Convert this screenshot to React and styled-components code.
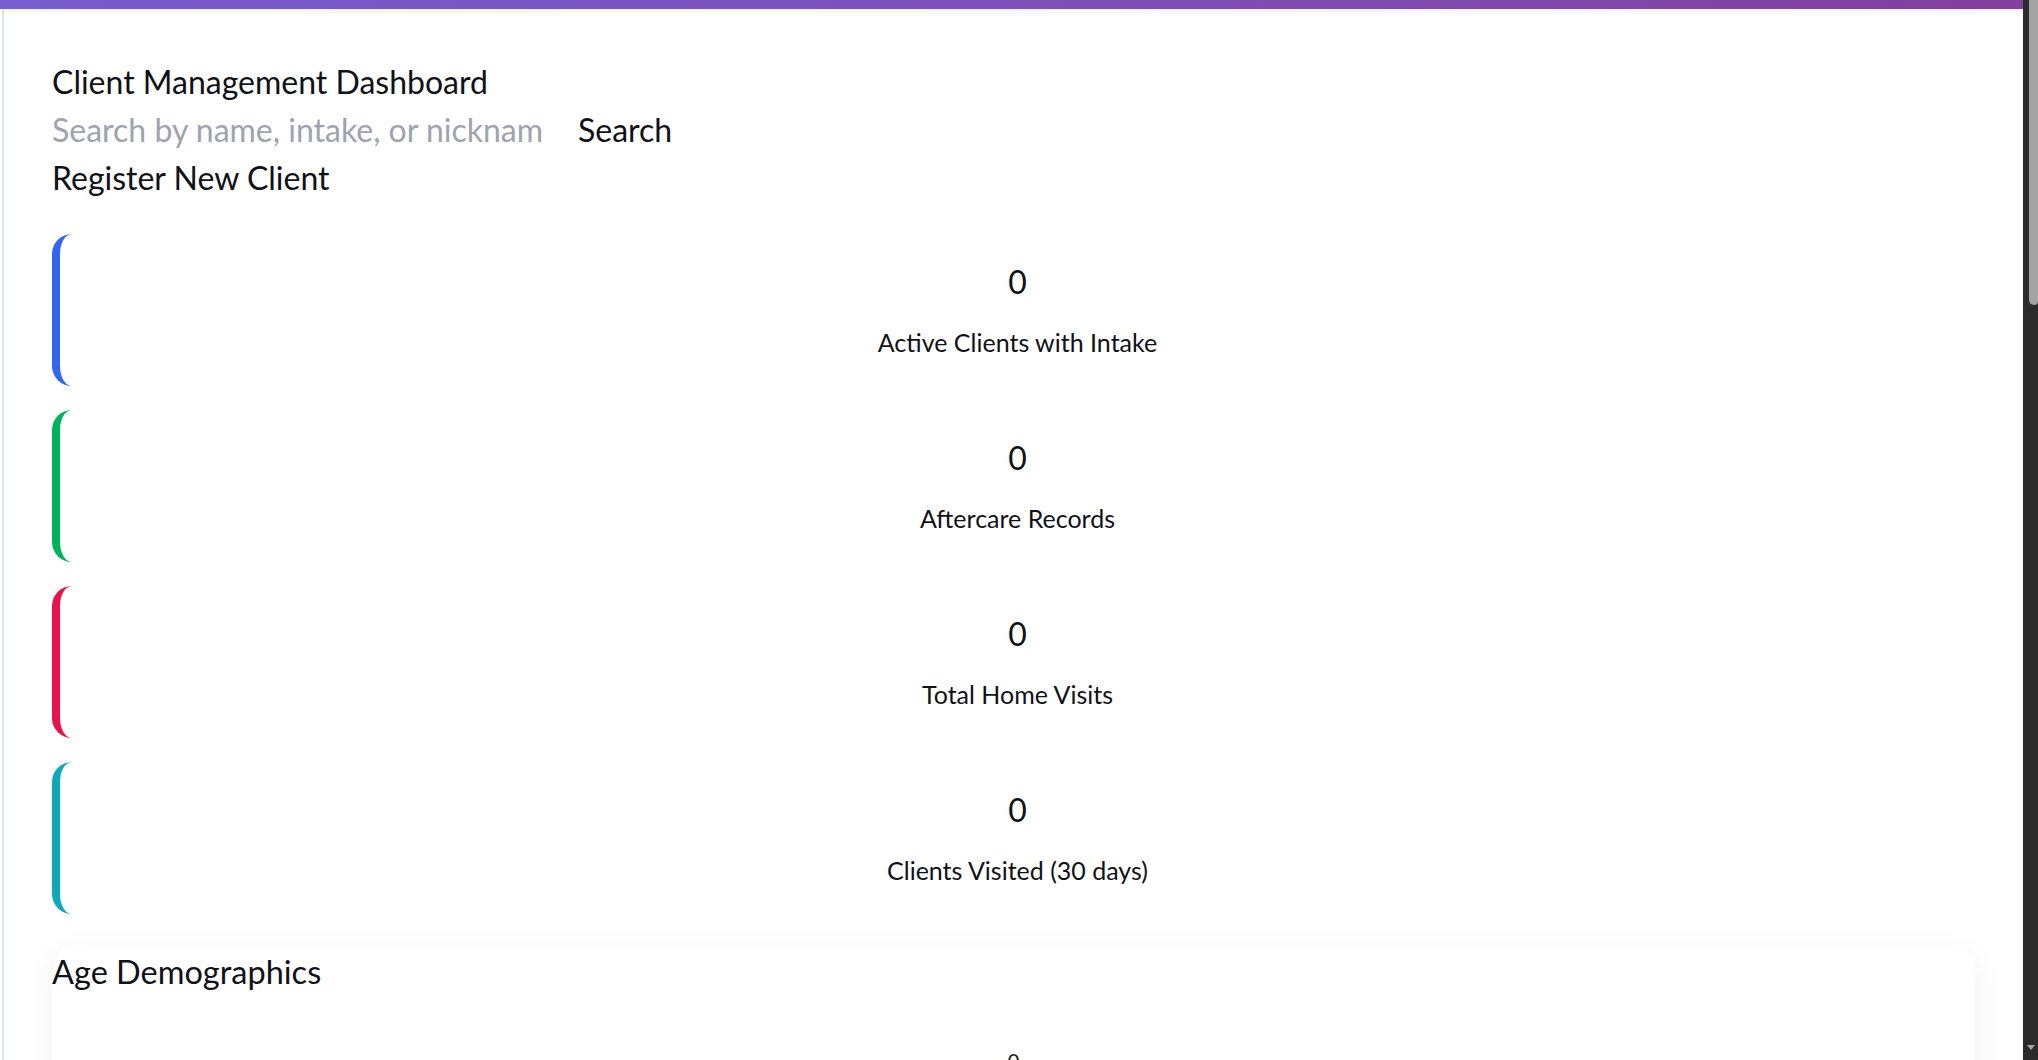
import React from "react";
import styled, { createGlobalStyle } from "styled-components";

const GlobalStyle = createGlobalStyle`
  html, body {
    margin: 0;
    padding: 0;
    background: #ffffff;
    color: #111118;
    font-family: Lato, "Open Sans", "Noto Sans", sans-serif;
  }
  * { box-sizing: border-box; }
`;

const Viewport = styled.div`
  display: flex;
  height: 100vh;
  overflow: hidden;
`;

const ScrollArea = styled.div`
  flex: 1;
  min-width: 0;
  overflow-y: auto;
  scrollbar-width: none;
  &::-webkit-scrollbar { display: none; }
`;

const ScrollTrack = styled.div`
  width: 15px;
  flex: none;
  background: #2b2b2b;
  display: flex;
  flex-direction: column;
  justify-content: space-between;
  align-items: flex-end;
`;

const ScrollThumb = styled.div`
  width: 9px;
  height: 305px;
  background: #a3a3a3;
  border-radius: 0 0 4px 5px;
`;

const ScrollArrow = styled.div`
  width: 0;
  height: 0;
  margin: 0 3px 10px 0;
  border-left: 4px solid transparent;
  border-right: 4px solid transparent;
  border-top: 5px solid #a3a3a3;
`;

const TopBar = styled.div`
  position: relative;
  z-index: 2;
  height: 9px;
  background: linear-gradient(90deg, #775dcd 0%, #7c50ba 50%, #833f9e 100%);
  box-shadow: 0 2px 6px rgba(0, 0, 0, 0.08);
`;

const Shell = styled.div`
  display: flex;
  min-height: 3580px;
`;

const Sidebar = styled.aside`
  width: 4px;
  flex: none;
  border-right: 2px solid #e0e4ec;
`;

const Main = styled.main`
  flex: 1;
  min-width: 0;
  padding: 49px 48px 48px;
`;

const Title = styled.h1`
  margin: 0;
  font-size: 32px;
  line-height: 48px;
  font-weight: 400;
`;

const SearchRow = styled.form`
  display: flex;
  align-items: center;
  gap: 34px;
`;

const SearchInput = styled.input`
  width: 492px;
  border: none;
  outline: none;
  padding: 0;
  background: transparent;
  font: inherit;
  font-size: 32px;
  line-height: 48px;
  color: #111118;
  &::placeholder { color: #9ea3b0; }
`;

const PlainButton = styled.button`
  display: block;
  border: none;
  background: transparent;
  padding: 0;
  font: inherit;
  font-size: 32px;
  line-height: 48px;
  color: #111118;
  cursor: pointer;
`;

const StatGrid = styled.section`
  display: grid;
  gap: 24px;
  margin-top: 32px;
`;

const StatCard = styled.div`
  background: #fff;
  border-left: 8px solid ${(p) => p.$accent};
  border-radius: 20px;
  padding: 24px;
  text-align: center;
`;

const StatValue = styled.div`
  font-size: 32px;
  line-height: 48px;
`;

const StatLabel = styled.div`
  margin-top: 16px;
  font-size: 25px;
  line-height: 40px;
`;

const Panel = styled.section`
  margin-top: 32px;
  padding-top: 2px;
  background: #fff;
  border-radius: 24px;
  box-shadow: 0 8px 32px rgba(0, 0, 0, 0.06);
  min-height: ${(p) => p.$min || 480}px;
`;

const PanelTitle = styled.h2`
  margin: 0;
  font-size: 32.5px;
  line-height: 48px;
  font-weight: 400;
`;

const ChartArea = styled.div`
  margin-top: 49px;
  display: flex;
  flex-direction: column;
  align-items: center;
  gap: 12px;
  font-size: 20px;
  line-height: 30px;
`;

const stats = [
  { value: 0, label: "Active Clients with Intake", color: "#3366f0" },
  { value: 0, label: "Aftercare Records", color: "#00b35a" },
  { value: 0, label: "Total Home Visits", color: "#e8134b" },
  { value: 0, label: "Clients Visited (30 days)", color: "#10a8b8" },
];

export default function App() {
  return (
    <>
      <GlobalStyle />
      <Viewport>
        <ScrollArea>
          <TopBar />
          <Shell>
            <Sidebar />
            <Main>
              <Title>Client Management Dashboard</Title>
              <SearchRow onSubmit={(e) => e.preventDefault()}>
                <SearchInput placeholder="Search by name, intake, or nickname" />
                <PlainButton type="submit">Search</PlainButton>
              </SearchRow>
              <PlainButton type="button">Register New Client</PlainButton>
              <StatGrid>
                {stats.map((s) => (
                  <StatCard key={s.label} $accent={s.color}>
                    <StatValue>{s.value}</StatValue>
                    <StatLabel>{s.label}</StatLabel>
                  </StatCard>
                ))}
              </StatGrid>
              <Panel $min={560}>
                <PanelTitle>Age Demographics</PanelTitle>
                <ChartArea>
                  <span>0</span>
                  <span>Total Clients</span>
                </ChartArea>
              </Panel>
              <Panel $min={620}>
                <PanelTitle>Gender Distribution</PanelTitle>
              </Panel>
              <Panel $min={700}>
                <PanelTitle>Recent Clients</PanelTitle>
              </Panel>
            </Main>
          </Shell>
        </ScrollArea>
        <ScrollTrack>
          <ScrollThumb />
          <ScrollArrow />
        </ScrollTrack>
      </Viewport>
    </>
  );
}
